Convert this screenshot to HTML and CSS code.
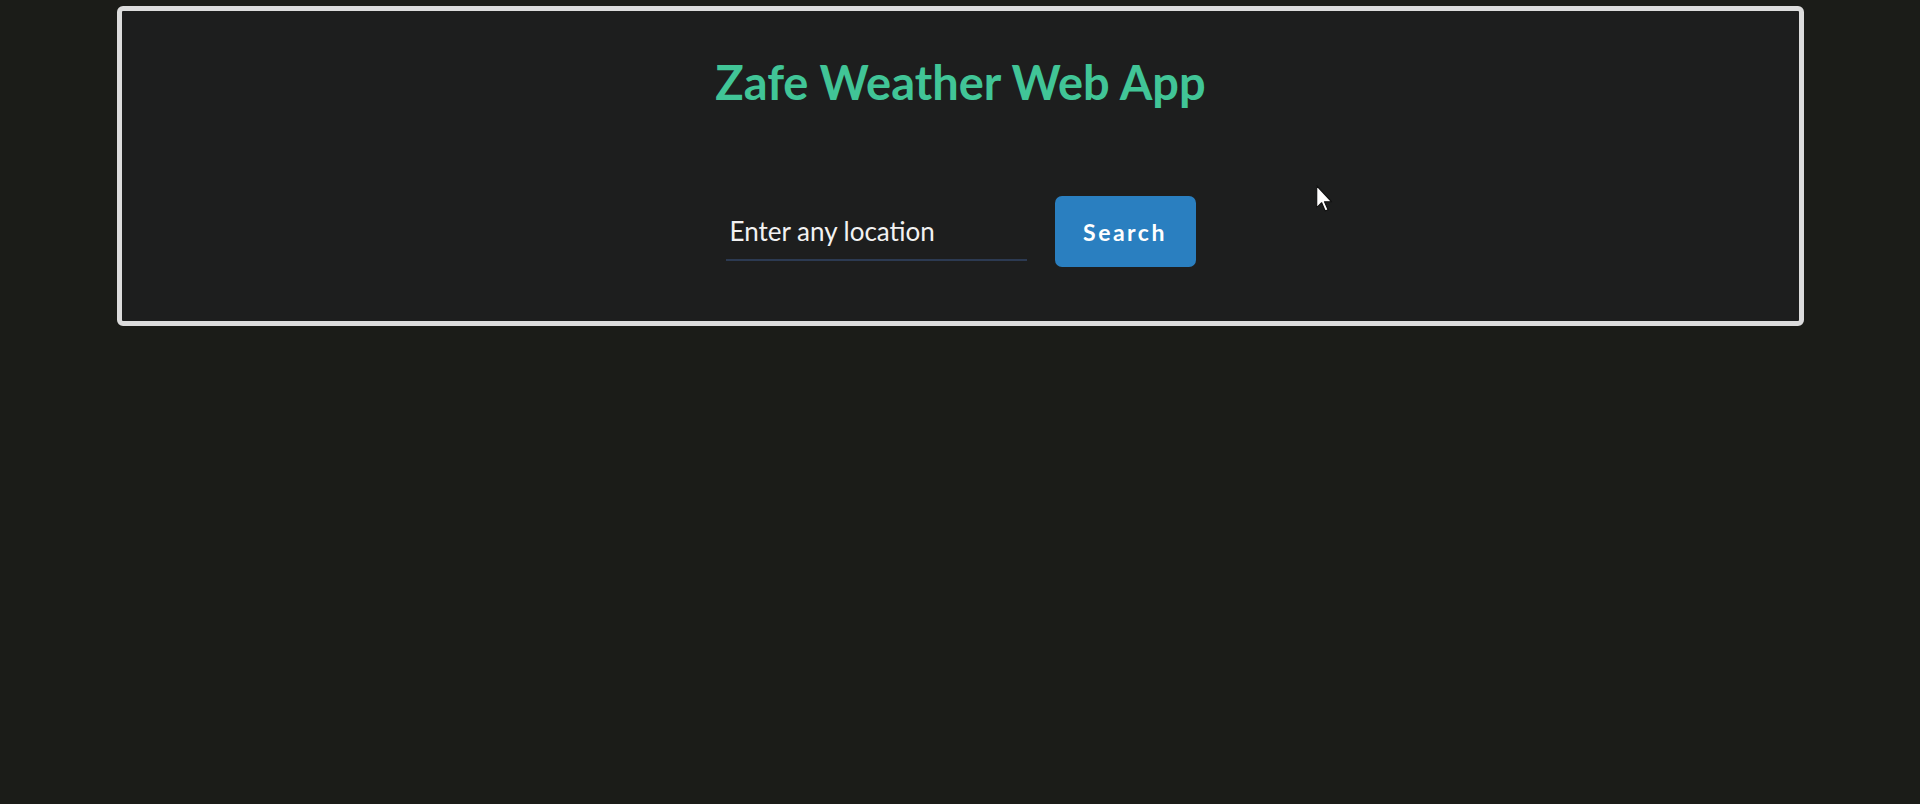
FILE: index.html
```html
<!DOCTYPE html>
<html lang="en">
<head>
<meta charset="utf-8">
<title>Zafe Weather Web App</title>
<link rel="stylesheet" href="styles.css">
</head>
<body>
<main class="card">
  <h1 class="title">Zafe Weather Web App</h1>
  <form class="search">
    <input class="location" type="text" placeholder="Enter any location">
    <button class="btn" type="button">Search</button>
  </form>
  <svg class="cursor" width="17" height="27" viewBox="0 0 12 19"><path d="M0.5 0.5 V16 L4 12.5 L6.5 18.3 L8.5 17.5 L6 11.8 H11 Z" fill="#fff" stroke="#111" stroke-width="0.8" stroke-linejoin="round"/></svg>
</main>
</body>
</html>
```
FILE: styles.css
```css
html, body {
  margin: 0;
  padding: 0;
  background: #1b1c18;
  height: 100%;
}
body {
  font-family: "Lato", "Open Sans", sans-serif;
  padding-top: 6px;
}
.card {
  position: relative;
  box-sizing: border-box;
  width: 1687px;
  height: 320px;
  margin: 0 0 0 117px;
  border: 5px solid #dcdcdc;
  border-radius: 6px;
  background: #1d1e1e;
  display: flex;
  flex-direction: column;
  align-items: center;
}
.title {
  margin: 43px 0 0 0;
  font-size: 47px;
  font-weight: 700;
  color: #41c597;
  line-height: 56px;
}
.search {
  display: flex;
  align-items: flex-end;
  gap: 28px;
  margin-top: 86px;
}
.location {
  box-sizing: border-box;
  width: 301px;
  height: 50px;
  margin-bottom: 6px;
  padding: 0 4px 9px;
  background: transparent;
  border: 0;
  border-bottom: 2px solid #2c3a52;
  font-family: inherit;
  font-size: 26px;
  color: #fff;
  outline: none;
}
.location::placeholder {
  color: #f2f2f2;
  opacity: 1;
}
.btn {
  width: 141px;
  height: 71px;
  border: 0;
  border-radius: 7px;
  background: #2a7fc0;
  color: #fff;
  font-family: inherit;
  font-weight: 700;
  font-size: 23px;
  letter-spacing: 2.5px;
  cursor: pointer;
}
.cursor {
  position: absolute;
  left: 1194px;
  top: 174px;
}
```
